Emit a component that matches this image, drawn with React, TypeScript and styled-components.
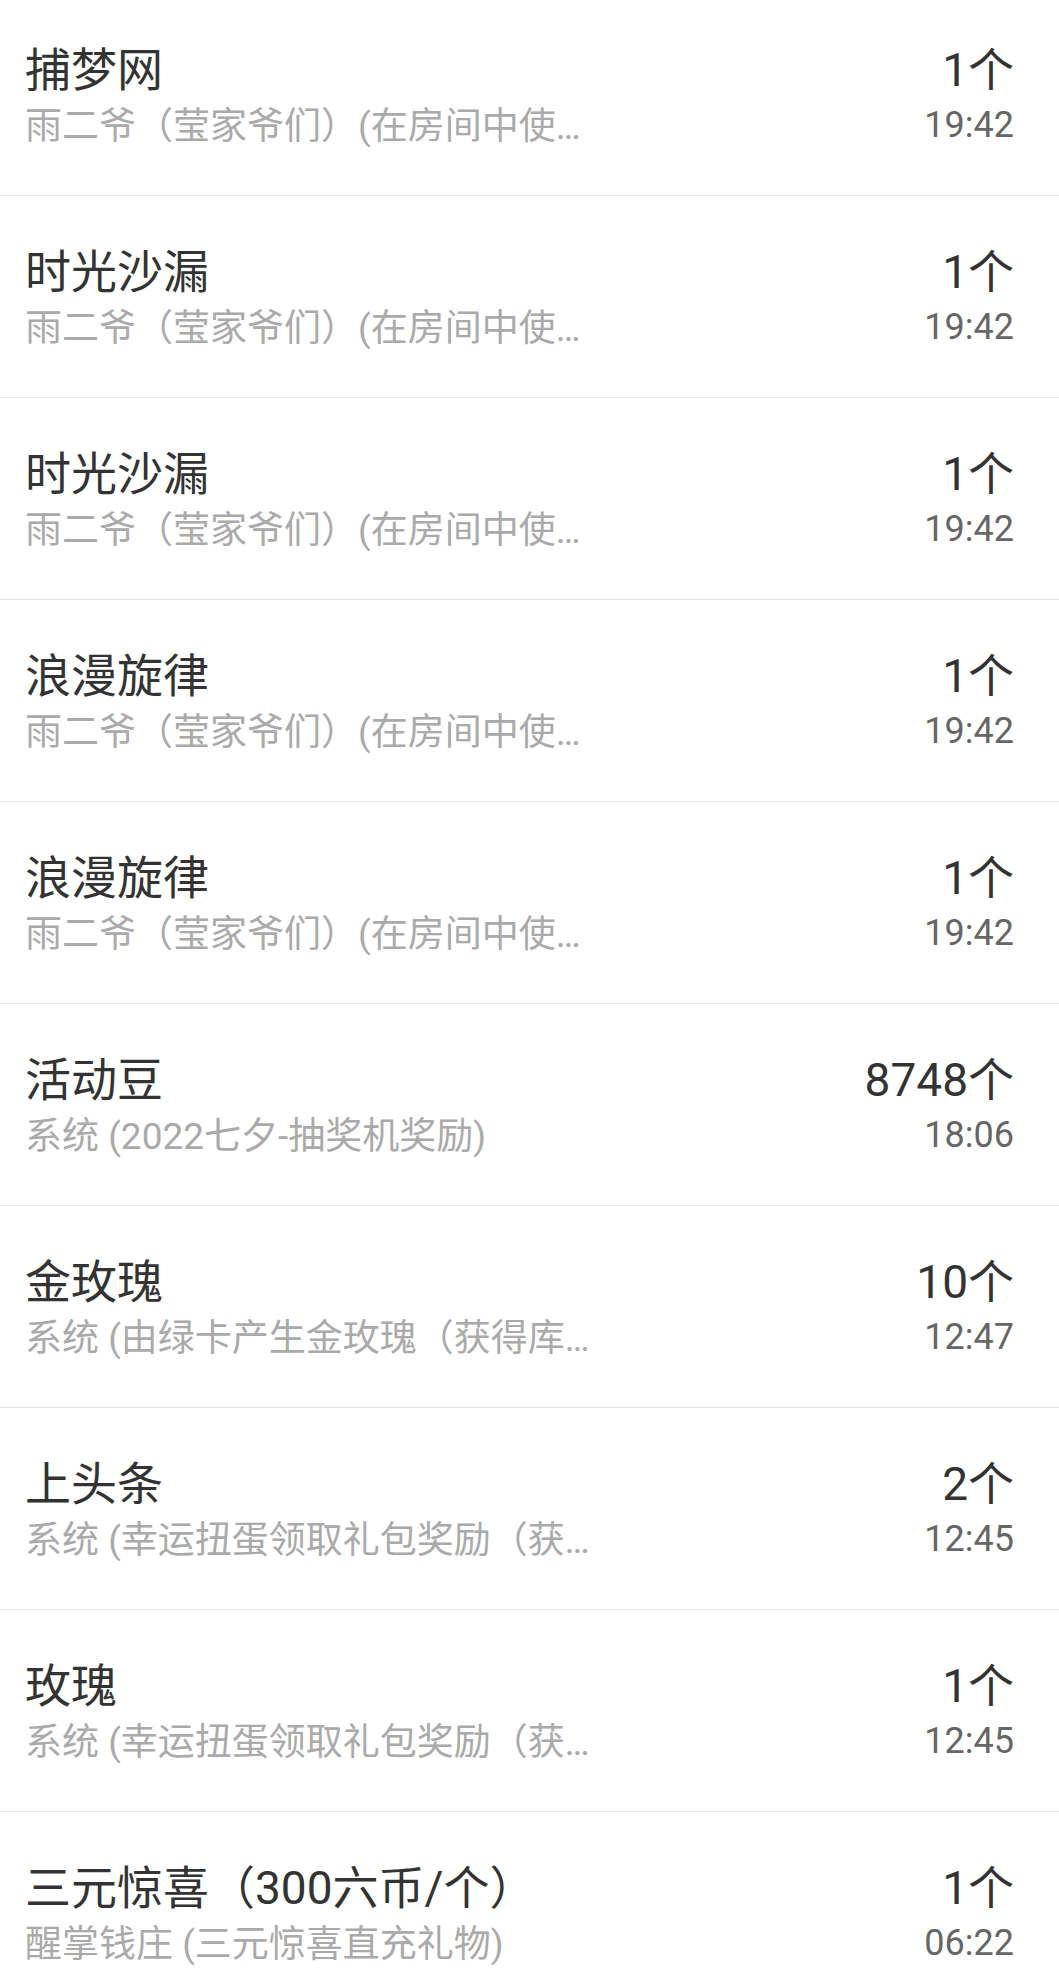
import React from 'react';
import styled, { createGlobalStyle } from 'styled-components';

const GlobalStyle = createGlobalStyle`
  html, body {
    margin: 0;
    padding: 0;
    background: #fff;
  }
  body {
    font-family: Roboto, "Noto Sans CJK SC", sans-serif;
  }
`;

const List = styled.ul`
  list-style: none;
  margin: -6px 0 0 0;
  padding: 0;
`;

const Row = styled.li`
  box-sizing: border-box;
  height: 202px;
  padding: 48px 45px 0 25px;
  border-bottom: 1px solid #e5e5e5;
  display: flex;
  justify-content: space-between;
  align-items: flex-start;
`;

const Left = styled.div`
  display: flex;
  flex-direction: column;
  gap: 7px;
  min-width: 0;
`;

const Right = styled.div`
  display: flex;
  flex-direction: column;
  align-items: flex-end;
  gap: 5px;
  flex-shrink: 0;
`;

const Title = styled.div`
  font-size: 46px;
  line-height: 56px;
  color: #333;
  white-space: nowrap;
`;

const Desc = styled.div`
  font-size: 37px;
  line-height: 44px;
  color: #aaa;
  max-width: 575px;
  white-space: nowrap;
  overflow: hidden;
  text-overflow: ellipsis;
`;

const Count = styled.div`
  font-size: 46px;
  line-height: 56px;
  color: #333;
  white-space: nowrap;
`;

const Time = styled.div`
  font-size: 36px;
  line-height: 44px;
  color: #666;
`;

type Record = { title: string; desc: string; count: string; time: string };

const records: Record[] = [
  { title: '捕梦网', desc: '雨二爷（莹家爷们）(在房间中使用道具)', count: '1个', time: '19:42' },
  { title: '时光沙漏', desc: '雨二爷（莹家爷们）(在房间中使用道具)', count: '1个', time: '19:42' },
  { title: '时光沙漏', desc: '雨二爷（莹家爷们）(在房间中使用道具)', count: '1个', time: '19:42' },
  { title: '浪漫旋律', desc: '雨二爷（莹家爷们）(在房间中使用道具)', count: '1个', time: '19:42' },
  { title: '浪漫旋律', desc: '雨二爷（莹家爷们）(在房间中使用道具)', count: '1个', time: '19:42' },
  { title: '活动豆', desc: '系统 (2022七夕-抽奖机奖励)', count: '8748个', time: '18:06' },
  { title: '金玫瑰', desc: '系统 (由绿卡产生金玫瑰（获得库存）)', count: '10个', time: '12:47' },
  { title: '上头条', desc: '系统 (幸运扭蛋领取礼包奖励（获得）)', count: '2个', time: '12:45' },
  { title: '玫瑰', desc: '系统 (幸运扭蛋领取礼包奖励（获得）)', count: '1个', time: '12:45' },
  { title: '三元惊喜（300六币/个）', desc: '醒掌钱庄 (三元惊喜直充礼物)', count: '1个', time: '06:22' },
];

const App: React.FC = () => {
  return (
    <>
      <GlobalStyle />
      <List>
        {records.map((r, i) => (
          <Row key={i}>
            <Left>
              <Title>{r.title}</Title>
              <Desc>{r.desc}</Desc>
            </Left>
            <Right>
              <Count>{r.count}</Count>
              <Time>{r.time}</Time>
            </Right>
          </Row>
        ))}
      </List>
    </>
  );
};

export default App;
